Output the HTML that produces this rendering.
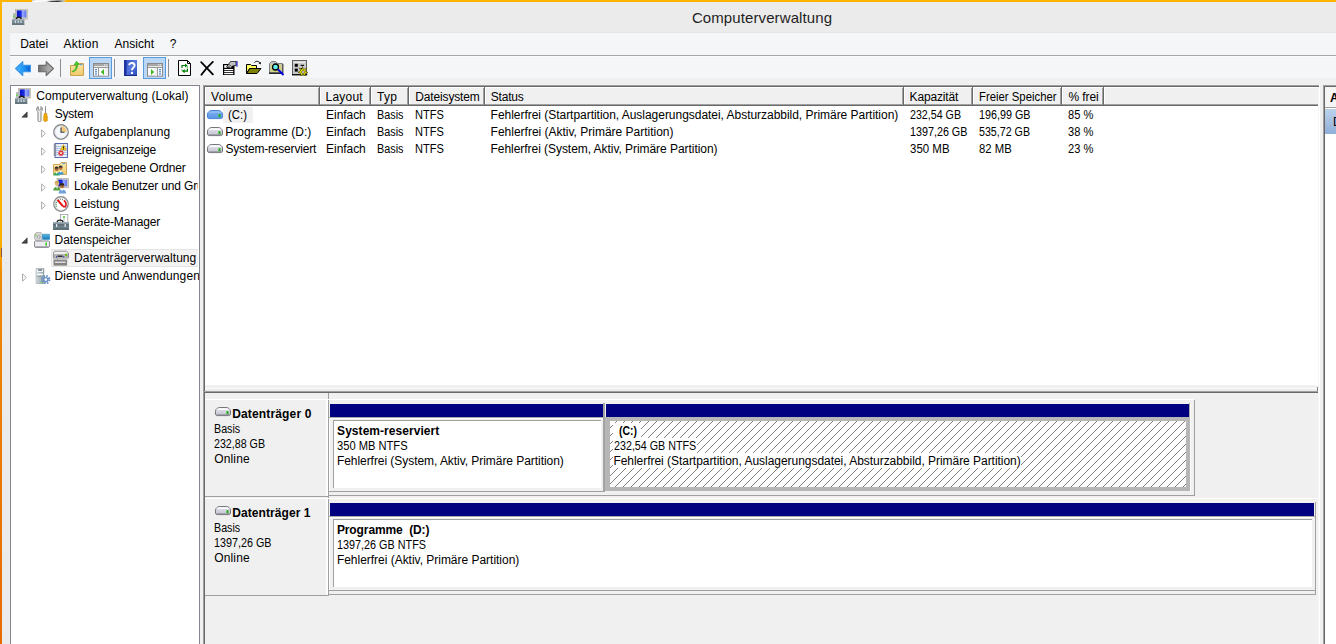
<!DOCTYPE html>
<html lang="de"><head><meta charset="utf-8"><title>Computerverwaltung</title>
<style>
html,body{margin:0;padding:0}
body{width:1336px;height:644px;overflow:hidden;position:relative;background:#f0f0f0;font-family:"Liberation Sans",sans-serif;font-size:12px;color:#000}
#w{position:absolute;left:0;top:0;width:1336px;height:644px;overflow:hidden}
#w>div,#w>svg,#w>span{position:absolute;display:block}
.t{line-height:20px;height:20px;white-space:nowrap}
</style></head><body><div id="w">
<div style="left:0px;top:0px;width:1336px;height:644px;background:#ebebeb;"></div>
<div style="left:0px;top:0px;width:1336px;height:2px;background:#ffb500;"></div>
<div style="left:0px;top:0px;width:2px;height:644px;background:linear-gradient(#ffb500 0,#fdb000 240px,#ee8a08 276px,#e86a04 644px);"></div>
<div style="left:1px;top:248px;width:1px;height:9px;background:rgba(90,50,90,.7);"></div>
<div style="left:32px;top:0;width:34px;height:1px;background:linear-gradient(90deg,#c8ccd4 0,#f4f4f4 12%,#fafafa 45%,#c4c4c4 60%,#8c8c8c 80%,#c8c8c8 94%,#ffb500 100%)"></div>
<div style="left:32px;top:1px;width:34px;height:1px;background:linear-gradient(90deg,#e8eef8 0,#fff 10%,#f0f0f0 42%,#505050 56%,#2c2c2c 75%,#a8a8a8 89%,#f0c050 96%,#ffb500 100%)"></div>
<div style="left:10px;top:32px;width:1326px;height:1px;background:#e6e6e6;"></div>
<div style="left:10px;top:33px;width:1326px;height:22px;background:#f5f6f7;"></div>
<div style="left:10px;top:55px;width:1326px;height:1px;background:#a8a8a8;"></div>
<div style="left:10px;top:56px;width:1326px;height:22px;background:#f5f6f7;"></div>
<div style="left:10px;top:56px;width:1326px;height:1px;background:#fcfcfc;"></div>
<div style="left:10px;top:78px;width:1326px;height:566px;background:#f0f0f0;"></div>
<div style="left:89px;top:57px;width:21px;height:20px;background:#bbd7f6;border:1px solid #5a9be0"></div>
<div style="left:143px;top:57px;width:21px;height:20px;background:#bbd7f6;border:1px solid #5a9be0"></div>
<div style="left:60px;top:59px;width:1px;height:18px;background:#8e8e8e;"></div>
<div style="left:114px;top:59px;width:1px;height:18px;background:#8e8e8e;"></div>
<div style="left:168px;top:59px;width:1px;height:18px;background:#8e8e8e;"></div>
<div style="left:10px;top:85px;width:188px;height:600px;background:#fff;border:1px solid #828790"></div>
<div style="left:51px;top:249px;width:146px;height:16px;background:#f3f3f3;border:1px solid #e4e4e4;border-right:0"></div>
<div style="left:203px;top:85px;width:1px;height:559px;background:#a0a0a0;"></div>
<div style="left:204px;top:85px;width:1px;height:559px;background:#696969;"></div>
<div style="left:203px;top:85px;width:1117px;height:1px;background:#a0a0a0;"></div>
<div style="left:204px;top:86px;width:1115px;height:1px;background:#696969;"></div>
<div style="left:205px;top:87px;width:1113px;height:298px;background:#fff;"></div>
<div style="left:1318px;top:87px;width:1px;height:557px;background:#f7f7f7;"></div>
<div style="left:1319px;top:85px;width:1px;height:559px;background:#fdfdfd;"></div>
<div style="left:205px;top:388px;width:1113px;height:1px;background:#fbfbfb;"></div>
<div style="left:205px;top:389px;width:1113px;height:2px;background:#ececec;"></div>
<div style="left:1317px;top:387px;width:1px;height:5px;background:#808080;"></div>
<div style="left:204px;top:391px;width:1114px;height:1px;background:#a0a0a0;"></div>
<div style="left:205px;top:392px;width:1113px;height:1px;background:#696969;"></div>
<div style="left:205px;top:87px;width:1113px;height:17px;background:#f0f0f0;"></div>
<div style="left:205px;top:87px;width:1113px;height:1px;background:#fff;"></div>
<div style="left:205px;top:104px;width:1113px;height:1px;background:#a0a0a0;"></div>
<div style="left:205px;top:105px;width:1113px;height:1px;background:#696969;"></div>
<div style="left:205px;top:87px;width:1px;height:17px;background:#fff;"></div>
<div style="left:318px;top:88px;width:1px;height:17px;background:#a0a0a0;"></div>
<div style="left:319px;top:87px;width:1px;height:18px;background:#696969;"></div>
<div style="left:320px;top:87px;width:1px;height:17px;background:#fff;"></div>
<div style="left:369px;top:88px;width:1px;height:17px;background:#a0a0a0;"></div>
<div style="left:370px;top:87px;width:1px;height:18px;background:#696969;"></div>
<div style="left:371px;top:87px;width:1px;height:17px;background:#fff;"></div>
<div style="left:407px;top:88px;width:1px;height:17px;background:#a0a0a0;"></div>
<div style="left:408px;top:87px;width:1px;height:18px;background:#696969;"></div>
<div style="left:409px;top:87px;width:1px;height:17px;background:#fff;"></div>
<div style="left:483px;top:88px;width:1px;height:17px;background:#a0a0a0;"></div>
<div style="left:484px;top:87px;width:1px;height:18px;background:#696969;"></div>
<div style="left:485px;top:87px;width:1px;height:17px;background:#fff;"></div>
<div style="left:902px;top:88px;width:1px;height:17px;background:#a0a0a0;"></div>
<div style="left:903px;top:87px;width:1px;height:18px;background:#696969;"></div>
<div style="left:904px;top:87px;width:1px;height:17px;background:#fff;"></div>
<div style="left:971px;top:88px;width:1px;height:17px;background:#a0a0a0;"></div>
<div style="left:972px;top:87px;width:1px;height:18px;background:#696969;"></div>
<div style="left:973px;top:87px;width:1px;height:17px;background:#fff;"></div>
<div style="left:1060px;top:88px;width:1px;height:17px;background:#a0a0a0;"></div>
<div style="left:1061px;top:87px;width:1px;height:18px;background:#696969;"></div>
<div style="left:1062px;top:87px;width:1px;height:17px;background:#fff;"></div>
<div style="left:1102px;top:88px;width:1px;height:17px;background:#a0a0a0;"></div>
<div style="left:1103px;top:87px;width:1px;height:18px;background:#696969;"></div>
<div style="left:1104px;top:87px;width:1px;height:17px;background:#fff;"></div>
<div style="left:223px;top:107px;width:30px;height:16px;background:#f1f1f1"></div>
<div style="left:1323px;top:85px;width:1px;height:559px;background:#a0a0a0;"></div>
<div style="left:1324px;top:86px;width:1px;height:558px;background:#696969;"></div>
<div style="left:1323px;top:85px;width:13px;height:1px;background:#a0a0a0;"></div>
<div style="left:1324px;top:86px;width:12px;height:1px;background:#696969;"></div>
<div style="left:1325px;top:87px;width:11px;height:557px;background:#fff;"></div>
<div style="left:1325px;top:87px;width:11px;height:20px;background:#f5f5f5;"></div>
<div style="left:1325px;top:107px;width:11px;height:1px;background:#a0a0a0;"></div>
<div style="left:1325px;top:109px;width:11px;height:25px;background:linear-gradient(#bcd2ec,#8fafd9);"></div>
<div style="left:328px;top:393px;width:1px;height:251px;background:#a0a0a0;"></div>
<div style="left:205px;top:399px;width:124px;height:1px;background:#fff;"></div>
<div style="left:205px;top:496px;width:124px;height:1px;background:#a0a0a0;"></div>
<div style="left:326px;top:400px;width:2px;height:96px;background:#fff;"></div>
<div style="left:329px;top:399px;width:865px;height:1px;background:#fff;"></div>
<div style="left:1194px;top:400px;width:1px;height:96px;background:#a0a0a0;"></div>
<div style="left:329px;top:495px;width:866px;height:1px;background:#a0a0a0;"></div>
<div style="left:330px;top:404px;width:273px;height:13px;background:#000080;"></div>
<div style="left:329px;top:417px;width:275px;height:1px;background:#a8a8a8;"></div>
<div style="left:329px;top:418px;width:274px;height:1px;background:#fff;"></div>
<div style="left:329px;top:418px;width:1px;height:73px;background:#fff;"></div>
<div style="left:333px;top:420px;width:268px;height:1px;background:#a0a0a0;"></div>
<div style="left:333px;top:420px;width:1px;height:68px;background:#a0a0a0;"></div>
<div style="left:334px;top:421px;width:267px;height:67px;background:#fff;"></div>
<div style="left:329px;top:491px;width:275px;height:1px;background:#a0a0a0;"></div>
<div style="left:603px;top:403px;width:2px;height:89px;background:#a4a4a4;"></div>
<div style="left:606px;top:404px;width:583px;height:13px;background:#000080;"></div>
<div style="left:1189px;top:403px;width:1px;height:14px;background:#a8a8a8;"></div>
<div style="left:1190px;top:403px;width:1px;height:89px;background:#fcfcfc;"></div>
<div style="left:605px;top:417px;width:585px;height:74px;background:#b6b6b6;"></div>
<svg style="left:610px;top:421px" width="576" height="66"><defs><pattern id="h" width="8" height="8" patternUnits="userSpaceOnUse" x="7" y="0"><rect x="0" y="7" width="1" height="1" fill="#7f7f7f"/><rect x="1" y="6" width="1" height="1" fill="#7f7f7f"/><rect x="2" y="5" width="1" height="1" fill="#7f7f7f"/><rect x="3" y="4" width="1" height="1" fill="#7f7f7f"/><rect x="4" y="3" width="1" height="1" fill="#7f7f7f"/><rect x="5" y="2" width="1" height="1" fill="#7f7f7f"/><rect x="6" y="1" width="1" height="1" fill="#7f7f7f"/><rect x="7" y="0" width="1" height="1" fill="#7f7f7f"/></pattern></defs><rect width="100%" height="100%" fill="#fff"/><rect width="100%" height="100%" fill="url(#h)"/></svg>
<div style="left:205px;top:498px;width:124px;height:1px;background:#fff;"></div>
<div style="left:205px;top:595px;width:124px;height:1px;background:#a0a0a0;"></div>
<div style="left:326px;top:499px;width:2px;height:96px;background:#fff;"></div>
<div style="left:329px;top:498px;width:989px;height:1px;background:#fff;"></div>
<div style="left:1315px;top:502px;width:1px;height:93px;background:#a0a0a0;"></div>
<div style="left:329px;top:594px;width:987px;height:1px;background:#a0a0a0;"></div>
<div style="left:330px;top:503px;width:984px;height:13px;background:#000080;"></div>
<div style="left:329px;top:516px;width:986px;height:1px;background:#a8a8a8;"></div>
<div style="left:329px;top:517px;width:985px;height:1px;background:#fff;"></div>
<div style="left:329px;top:517px;width:1px;height:73px;background:#fff;"></div>
<div style="left:333px;top:519px;width:979px;height:1px;background:#a0a0a0;"></div>
<div style="left:333px;top:519px;width:1px;height:68px;background:#a0a0a0;"></div>
<div style="left:334px;top:520px;width:978px;height:67px;background:#fff;"></div>
<div style="left:329px;top:590px;width:986px;height:1px;background:#a0a0a0;"></div>
<div style="left:205px;top:596px;width:124px;height:1px;background:#f0f0f0;"></div>
<div style="left:328px;top:596px;width:1px;height:48px;background:#f0f0f0;"></div>
<div style="left:613px;top:423px;width:28px;height:15px;background:#fff;"></div>
<div style="left:613px;top:438px;width:84px;height:15px;background:#fff;"></div>
<div style="left:613px;top:453px;width:408px;height:15px;background:#fff;"></div>
<svg style="left:12px;top:9px" width="16" height="16" viewBox="0 0 16 16"><defs><linearGradient id="scr" x1="0" y1="0" x2="1" y2="0"><stop offset="0" stop-color="#0a14c8"/><stop offset=".45" stop-color="#1a2ee0"/><stop offset=".6" stop-color="#9aa8ff"/><stop offset="1" stop-color="#5a74ee"/></linearGradient></defs>
<rect x="1" y="4" width="2.5" height="6.5" fill="#b8bcc0"/><rect x="1.2" y="6.5" width="1.6" height="1.4" fill="#50e030"/>
<rect x="3.5" y="0" width="12.5" height="10" fill="#d8d4c4" stroke="#a8a498" stroke-width=".6"/><rect x="4.8" y="1.4" width="9.6" height="7.2" fill="url(#scr)"/>
<path d="M4.3 10.2C4.3 7.6 9.2 7.6 9.2 10.2" fill="none" stroke="#1a1a1a" stroke-width="1.3"/>
<rect x="0" y="10" width="12.3" height="5.8" fill="#74868f"/><rect x="0" y="10" width="12.3" height="1.3" fill="#9fb0b8"/><rect x="0" y="14.6" width="12.3" height="1.2" fill="#5d6d76"/>
<rect x="2.8" y="11.5" width="1.1" height="2.4" fill="#e8eef0"/><rect x="5.6" y="11.5" width="1.1" height="2.4" fill="#e8eef0"/><rect x="8.4" y="11.5" width="1.1" height="2.4" fill="#e8eef0"/></svg>
<svg style="left:15px;top:61px" width="16" height="16" viewBox="0 0 16 16"><defs><linearGradient id="bk" x1="0" y1="0" x2="1" y2="0"><stop offset="0" stop-color="#4ab4ff"/><stop offset=".55" stop-color="#1e96f5"/><stop offset="1" stop-color="#0a5ccc"/></linearGradient></defs>
<path d="M0.6 7.5L7.8 0.6V4.4H15.4V10.8H7.8V14.6Z" fill="url(#bk)" stroke="#3a94e8" stroke-width="1.1" stroke-linejoin="round"/></svg>
<svg style="left:38px;top:61px" width="16" height="16" viewBox="0 0 16 16"><defs><linearGradient id="fw" x1="0" y1="0" x2="1" y2="0"><stop offset="0" stop-color="#6e6e6e"/><stop offset=".5" stop-color="#9c9c9c"/><stop offset="1" stop-color="#b8b8b8"/></linearGradient></defs>
<path d="M15.4 7.5L8.2 0.6V4.4H0.6V10.8H8.2V14.6Z" fill="url(#fw)" stroke="#6a6a6a" stroke-width="1.1" stroke-linejoin="round"/></svg>
<svg style="left:70px;top:61px" width="16" height="16" viewBox="0 0 16 16"><defs><linearGradient id="fu" x1="0" y1="0" x2="0" y2="1"><stop offset="0" stop-color="#fae6a8"/><stop offset="1" stop-color="#f0c868"/></linearGradient></defs>
<path d="M0.5 4.5H7L8.5 2.5H13.5V14.5H0.5Z" fill="url(#fu)" stroke="#c8a050" stroke-width="1"/><rect x="10" y="3.2" width="2.5" height="1" fill="#4a90e0"/>
<path d="M2 10.5C5 9.5 6.5 6.5 6 3.5L3.8 4.2L6.5 0.2L9.5 3.6L7.6 3.5C8 7.5 5.5 10.5 2.5 11Z" fill="#48c828" stroke="#2fa018" stroke-width=".5"/></svg>
<svg style="left:93px;top:63px" width="16" height="16" viewBox="0 0 16 16"><rect x=".5" y=".5" width="15" height="12.6" fill="#fff" stroke="#8a8a8a" stroke-width="1"/><rect x="1" y="1" width="14" height="2" fill="#a8a8a8"/><rect x="11.2" y="1.3" width="1.1" height="1.1" fill="#fff"/><rect x="13.2" y="1.3" width="1.1" height="1.1" fill="#fff"/><rect x="1" y="3" width="14" height="1" fill="#e8e8e8"/><rect x="1" y="4" width="14" height="1" fill="#9a9a9a"/><rect x="5" y="5" width="1" height="8" fill="#9a9a9a"/><rect x="2" y="6" width="2" height="1.2" fill="#4a84c8"/><rect x="2" y="8.2" width="2" height="1.2" fill="#4a84c8"/><rect x="2" y="10.4" width="2" height="1.2" fill="#4a84c8"/><path d="M11 6V12L7.8 9Z" fill="#3cb81e"/><rect x="11.5" y="5" width="3.5" height="7.6" fill="#f0f0f0"/></svg>
<svg style="left:124px;top:60px" width="16" height="16" viewBox="0 0 16 16"><defs><linearGradient id="hp" x1="0" y1="0" x2="1" y2="1"><stop offset="0" stop-color="#2a4ac8"/><stop offset=".5" stop-color="#5878e0"/><stop offset="1" stop-color="#2a46b8"/></linearGradient></defs>
<rect x="0" y="0" width="13" height="16" fill="url(#hp)"/><rect x="0" y="0" width="2.6" height="16" fill="#1e34a0"/><rect x="0" y="15" width="13" height="1" fill="#1a2c88"/>
<path d="M5.2 5.2C5.2 2.2 10.6 2.2 10.6 5.4C10.6 7.6 8 7.8 8 10.2" fill="none" stroke="#fff" stroke-width="1.9"/><circle cx="8" cy="12.9" r="1.2" fill="#fff"/></svg>
<svg style="left:147px;top:63px" width="16" height="16" viewBox="0 0 16 16"><rect x=".5" y=".5" width="15" height="12.6" fill="#fff" stroke="#8a8a8a" stroke-width="1"/><rect x="1" y="1" width="14" height="2" fill="#a8a8a8"/><rect x="11.2" y="1.3" width="1.1" height="1.1" fill="#fff"/><rect x="13.2" y="1.3" width="1.1" height="1.1" fill="#fff"/><rect x="1" y="3" width="14" height="1" fill="#e8e8e8"/><rect x="1" y="4" width="14" height="1" fill="#9a9a9a"/><rect x="10" y="5" width="1" height="8" fill="#9a9a9a"/><rect x="12" y="6" width="2" height="1.2" fill="#4a84c8"/><rect x="12" y="8.2" width="2" height="1.2" fill="#4a84c8"/><rect x="12" y="10.4" width="2" height="1.2" fill="#4a84c8"/><path d="M4 6V12L7.2 9Z" fill="#3cb81e"/><rect x="7.5" y="5" width="2.5" height="7.6" fill="#f0f0f0"/></svg>
<svg style="left:178px;top:60px" width="16" height="16" viewBox="0 0 16 16"><path d="M0.5 0.5H9.5L12.5 3.5V15.5H0.5Z" fill="#fff" stroke="#000" stroke-width="1"/><path d="M9.5 0.5V3.5H12.5" fill="none" stroke="#000" stroke-width="1"/>
<path d="M4 8V5.5H7.5" fill="none" stroke="#008000" stroke-width="1.2"/><path d="M7 3.4L9.6 5.5L7 7.6Z" fill="#008000"/>
<path d="M9.4 8.6V11.2H6" fill="none" stroke="#008000" stroke-width="1.2"/><path d="M6.6 9.1L4 11.2L6.6 13.3Z" fill="#008000"/><path d="M4 9.5V10.5M9.4 6.5V7.5" stroke="#008000" stroke-width="1.2"/></svg>
<svg style="left:200px;top:61px" width="16" height="16" viewBox="0 0 16 16"><path d="M1.2 1.2C4 4 9 9.5 12.8 13.4M12.8 0.9C9.5 4 4 10 1.4 13.8" fill="none" stroke="#000" stroke-width="1.8" stroke-linecap="round"/></svg>
<svg style="left:222px;top:60px" width="16" height="16" viewBox="0 0 16 16"><rect x="1" y="4" width="11.5" height="11" fill="#000"/><rect x="2.2" y="5.2" width="3" height="2.6" fill="#fff"/><rect x="2.2" y="9" width="9" height="1.2" fill="#fff"/><rect x="2.2" y="11" width="9" height="1.2" fill="#fff"/><rect x="2.2" y="13" width="9" height="1.2" fill="#fff"/>
<path d="M4.5 7L8.5 1.5H14V5.5L10.5 6L9 8.5Z" fill="#c0c0c0" stroke="#000" stroke-width=".7"/><path d="M6 5.5L8.5 8M7 4.2L9.5 6.8" stroke="#000" stroke-width=".6"/><rect x="14.4" y="1" width="1.1" height="5.6" fill="#0000c0"/></svg>
<svg style="left:246px;top:60px" width="16" height="16" viewBox="0 0 16 16"><path d="M0.5 4.5H4.5L5.5 5.5H10.5V8.5H3.5L0.5 13.5Z" fill="#ffff60" stroke="#000" stroke-width="1"/><path d="M0.5 13.5L4 8.5H15L11 13.5Z" fill="#808000" stroke="#000" stroke-width="1"/>
<path d="M8.5 2.5C10 0.8 13 0.8 14.2 3.5" fill="none" stroke="#000" stroke-width="1"/><path d="M12.6 3.2L14.6 4.6L15 2Z" fill="#000"/></svg>
<svg style="left:269px;top:60px" width="16" height="16" viewBox="0 0 16 16"><path d="M0.5 3.5L2.5 1.5H6.5L8.5 3.5H13.5V13H0.5Z" fill="#c0c0c0" stroke="#808080" stroke-width="1"/><rect x="1.5" y="4.5" width="11" height="7.5" fill="#d8d870" opacity=".75"/><rect x="0" y="12.6" width="14" height="1.2" fill="#000"/><rect x="13.4" y="4" width="1" height="9.5" fill="#404040"/>
<circle cx="6.5" cy="7" r="3" fill="#60f0f0" stroke="#000" stroke-width="1.3"/><path d="M9 9.5L14.5 15" stroke="#0000e0" stroke-width="2"/></svg>
<svg style="left:292px;top:60px" width="16" height="16" viewBox="0 0 16 16"><rect x=".5" y=".5" width="14" height="14" fill="#c8c8c8" stroke="#606060" stroke-width="1"/><rect x="0" y="14.2" width="15.2" height="1.2" fill="#000"/><rect x="1.5" y="1.5" width="12" height="1.6" fill="#e8e8e8"/>
<rect x="2.8" y="3.8" width="3" height="3" fill="#000"/><rect x="2.8" y="8.6" width="3" height="3" fill="#000"/><rect x="8.6" y="4.8" width="3.4" height="1.1" fill="#000"/><rect x="8.6" y="8" width="2.4" height="3" fill="#000"/>
<path d="M10.5 6.5L11.6 9.6L14.6 8.2L13.4 11.2L16 12.6L13 13.4L13.4 16L11 14.2L9 16L8.8 13.2L6 12.4L8.6 10.8L7.4 8L10 9.4Z" fill="#f8f000" stroke="#3a3a00" stroke-width=".6"/><circle cx="11" cy="12" r="1.5" fill="#c8c8c8" stroke="#3a3a00" stroke-width=".5"/></svg>
<svg style="left:15px;top:88px" width="16" height="16" viewBox="0 0 16 16"><defs><linearGradient id="scr" x1="0" y1="0" x2="1" y2="0"><stop offset="0" stop-color="#0a14c8"/><stop offset=".45" stop-color="#1a2ee0"/><stop offset=".6" stop-color="#9aa8ff"/><stop offset="1" stop-color="#5a74ee"/></linearGradient></defs>
<rect x="1" y="4" width="2.5" height="6.5" fill="#b8bcc0"/><rect x="1.2" y="6.5" width="1.6" height="1.4" fill="#50e030"/>
<rect x="3.5" y="0" width="12.5" height="10" fill="#d8d4c4" stroke="#a8a498" stroke-width=".6"/><rect x="4.8" y="1.4" width="9.6" height="7.2" fill="url(#scr)"/>
<path d="M4.3 10.2C4.3 7.6 9.2 7.6 9.2 10.2" fill="none" stroke="#1a1a1a" stroke-width="1.3"/>
<rect x="0" y="10" width="12.3" height="5.8" fill="#74868f"/><rect x="0" y="10" width="12.3" height="1.3" fill="#9fb0b8"/><rect x="0" y="14.6" width="12.3" height="1.2" fill="#5d6d76"/>
<rect x="2.8" y="11.5" width="1.1" height="2.4" fill="#e8eef0"/><rect x="5.6" y="11.5" width="1.1" height="2.4" fill="#e8eef0"/><rect x="8.4" y="11.5" width="1.1" height="2.4" fill="#e8eef0"/></svg>
<svg style="left:36px;top:106px" width="16" height="16" viewBox="0 0 16 16"><path d="M2.2 0.6C0.2 1.6 0.2 4.6 2 5.6V14.6C2 16 5 16 5 14.6V5.6C6.8 4.6 6.8 1.6 5 0.6V3.4L3.6 4.2L2.2 3.4Z" fill="#f4f4f4" stroke="#7c7c7c" stroke-width="1"/>
<rect x="9" y="0.3" width="1" height="7.2" fill="#8a8a8a"/><path d="M8.2 7.4H10.8V9.2L11.3 10V14.6C11.3 15.8 7.7 15.8 7.7 14.6V10L8.2 9.2Z" fill="#f2a800" stroke="#c88400" stroke-width=".6"/></svg>
<svg style="left:53px;top:124px" width="16" height="16" viewBox="0 0 16 16"><circle cx="8" cy="8" r="7.2" fill="#f4f8fc" stroke="#888" stroke-width="1.4"/><path d="M8 8V1.8A6.2 6.2 0 0 1 14.2 8Z" fill="#f4c878"/><circle cx="8" cy="8" r="6" fill="none" stroke="#dfe6ee" stroke-width=".8"/><path d="M8 3.6V8.3H11.6" fill="none" stroke="#2c3a50" stroke-width="1.1"/></svg>
<svg style="left:53px;top:142px" width="16" height="16" viewBox="0 0 16 16"><rect x="2" y="1.5" width="12.5" height="14" fill="#e6ecf8" stroke="#5a6cb0" stroke-width="1"/><path d="M3 4.5H14M3 6.5H14M3 8.5H14M3 10.5H14M3 12.5H14" stroke="#aabce6" stroke-width=".8"/>
<path d="M.6 3H3.2M.6 5H3.2M.6 7H3.2M.6 9H3.2M.6 11H3.2M.6 13H3.2" stroke="#6e6e6e" stroke-width="1.1"/>
<path d="M10.4 2.6L13.4 8H7.4Z" fill="#f8d020" stroke="#c09000" stroke-width=".5"/><rect x="10" y="4.4" width=".9" height="2" fill="#000"/><rect x="10" y="6.8" width=".9" height=".7" fill="#000"/>
<circle cx="8" cy="11.2" r="2.6" fill="#e03030"/><path d="M6.9 10.1L9.1 12.3M9.1 10.1L6.9 12.3" stroke="#fff" stroke-width=".9"/></svg>
<svg style="left:53px;top:160px" width="16" height="16" viewBox="0 0 16 16"><defs><linearGradient id="sf" x1="0" y1="0" x2="0" y2="1"><stop offset="0" stop-color="#fbe9b0"/><stop offset="1" stop-color="#f2cc6c"/></linearGradient></defs>
<path d="M0.5 4.5H6.5L8 2.5H13.5V14.5H0.5Z" fill="url(#sf)" stroke="#d0a858" stroke-width="1"/><rect x="9.2" y="3.2" width="3" height="1" fill="#5a98e8"/>
<circle cx="3.6" cy="9" r="2" fill="#a06838"/><path d="M1.6 8.6A2 2 0 0 1 5.6 8.6Z" fill="#2a2a2a"/><path d="M0.4 15.6C0.4 11.4 6.8 11.4 6.8 15.6Z" fill="#38a860"/>
<circle cx="7.6" cy="8" r="2" fill="#b07848"/><path d="M5.6 7.6A2 2 0 0 1 9.6 7.6Z" fill="#2a2a2a"/><path d="M4.6 14.4C4.6 10.4 10.6 10.4 10.6 14.4Z" fill="#3a9ad8"/><path d="M6.6 11L7.6 13L8.6 11Z" fill="#fff"/><path d="M2.6 12L3.6 14L4.6 12Z" fill="#fff"/></svg>
<svg style="left:53px;top:178px" width="16" height="16" viewBox="0 0 16 16"><defs><linearGradient id="us" x1="0" y1="0" x2="1" y2="0"><stop offset="0" stop-color="#0a14c8"/><stop offset=".4" stop-color="#1a2ee0"/><stop offset=".6" stop-color="#9aa8ff"/><stop offset="1" stop-color="#5a74ee"/></linearGradient></defs>
<rect x="4" y="0.4" width="11.6" height="9.4" fill="#d8d4c4" stroke="#a8a498" stroke-width=".6"/><rect x="5.2" y="1.6" width="9" height="6.8" fill="url(#us)"/>
<circle cx="4" cy="5.4" r="2.3" fill="#e0b080"/><path d="M1.7 5A2.3 2.3 0 0 1 6.3 5Z" fill="#c8a850"/><path d="M0.2 12.6C0.2 7.6 7.6 7.6 7.6 12.6Z" fill="#58a040"/><path d="M3 8.6L4 11L5 8.6Z" fill="#fff"/>
<circle cx="9" cy="7.8" r="2.4" fill="#a86c40"/><path d="M6.6 7.4A2.4 2.4 0 0 1 11.4 7.4Z" fill="#2a2420"/><path d="M5.6 15.6C5.6 10 13.2 10 13.2 15.6Z" fill="#70a0d8"/><path d="M8 11L9 13.4L10 11Z" fill="#fff"/></svg>
<svg style="left:53px;top:196px" width="16" height="16" viewBox="0 0 16 16"><circle cx="8" cy="8" r="7.2" fill="#fff" stroke="#8c8c8c" stroke-width="1.4"/><circle cx="8" cy="8" r="6" fill="none" stroke="#e4e4e4" stroke-width=".8"/>
<path d="M3.6 10.6A5 5 0 0 1 6 3.6" fill="none" stroke="#509060" stroke-width="1.4" stroke-dasharray="1 .9"/><path d="M7 3.2A5 5 0 0 1 10.4 4" fill="none" stroke="#708878" stroke-width="1.3" stroke-dasharray="1 .9"/>
<path d="M10.8 4.4A5 5 0 0 1 12.4 10.6H10" fill="none" stroke="#e01818" stroke-width="1.7"/><path d="M4.6 3.8L10 10.4" stroke="#e81010" stroke-width="2"/></svg>
<svg style="left:53px;top:214px" width="16" height="16" viewBox="0 0 16 16"><rect x="7.4" y=".5" width="7.4" height="8" fill="#fff" stroke="#a0a0a0" stroke-width=".8"/><rect x="10" y="2" width="2" height="6" fill="#d8dce0"/><circle cx="11" cy="3" r="1" fill="#58d030"/>
<path d="M4.2 8.2C4.2 5.4 10 5.4 10 8.2" fill="none" stroke="#1a1a1a" stroke-width="1.3"/>
<rect x="0" y="8" width="16" height="7.8" fill="#6c7e88"/><rect x="0" y="8" width="16" height="1.6" fill="#98aab2"/><rect x="0" y="14.4" width="16" height="1.4" fill="#56666e"/><rect x="0" y="10.4" width="16" height=".8" fill="#56666e"/>
<rect x="3" y="10" width="1.2" height="3" fill="#e8eef0"/><rect x="11.6" y="10" width="1.2" height="3" fill="#e8eef0"/></svg>
<svg style="left:34px;top:232px" width="16" height="16" viewBox="0 0 16 16"><defs><linearGradient id="sc" x1="0" y1="0" x2="0" y2="1"><stop offset="0" stop-color="#58b8e8"/><stop offset="1" stop-color="#1878b0"/></linearGradient></defs>
<ellipse cx="4.6" cy="4.6" rx="4.4" ry="4.6" fill="#d4d4d4" stroke="#9a9a9a" stroke-width=".7"/><circle cx="4.8" cy="5" r="1.3" fill="#fff" stroke="#707070" stroke-width=".6"/><circle cx="1.8" cy="3.4" r=".8" fill="#70d840"/>
<rect x="8.4" y="2.2" width="7.4" height="5.4" rx="1" fill="url(#sc)" stroke="#2888c0" stroke-width=".6"/>
<path d="M0.5 10C0.5 9 1 9 2 9H14C15 9 15.5 9 15.5 10V14C15.5 15.4 14.6 15.4 14 15.4H2C1 15.4 .5 15.4 .5 14Z" fill="#ececf2" stroke="#8a8a92" stroke-width="1"/><rect x="1" y="14" width="14" height="1" fill="#b0b0b8"/><rect x="11.4" y="10.6" width="1.6" height="3" fill="#40c820"/></svg>
<svg style="left:53px;top:250px" width="16" height="16" viewBox="0 0 16 16"><path d="M1.5 1.2H13.5L15.5 3V8H0.5V3Z" fill="#f0f0f0" stroke="#909090" stroke-width="1"/><rect x="1" y="4" width="14" height="4" fill="#b4b4b4"/><rect x="4.6" y="5.6" width="5" height="1.2" fill="#101010"/><rect x="3" y="6.4" width="1" height="1" fill="#0000c0"/><rect x="10.2" y="6.4" width="1" height="1" fill="#0000c0"/><rect x="12" y="3.6" width="2.2" height="2.6" fill="#c89020"/><rect x="12.4" y="4" width="1.4" height="1.8" fill="#30e020"/>
<rect x=".5" y="8.6" width="13.6" height="7" fill="#848484"/><rect x=".5" y="8.6" width="13.6" height="1.2" fill="#d8d8d8"/><rect x="2" y="11.6" width="10.6" height="1.2" fill="#f0f0f0"/><rect x="4" y="8.6" width="1" height="1.6" fill="#909090"/></svg>
<svg style="left:35px;top:268px" width="16" height="16" viewBox="0 0 16 16"><defs><linearGradient id="sv" x1="0" y1="0" x2="1" y2="0"><stop offset="0" stop-color="#d4dcde"/><stop offset="1" stop-color="#8a9aa0"/></linearGradient></defs>
<rect x="1" y="0.3" width="8" height="15.6" fill="url(#sv)" stroke="#a0aab0" stroke-width=".5"/><rect x="2" y="1.4" width="6" height="2.6" fill="#f4f8f8"/><rect x="3" y="1.6" width="4" height=".9" fill="#203040"/><rect x="2" y="5.4" width="6" height="1.8" fill="#f0f4f4"/><rect x="2" y="8" width="5" height=".8" fill="#8a969a"/><rect x="5.8" y="14" width="2" height="1" fill="#60e040"/>
<g transform="translate(10.8,11.6)"><circle r="3.4" fill="none" stroke="#6890c8" stroke-width="2.4" stroke-dasharray="1.5 1.17"/><circle r="2.6" fill="#6890c8"/><circle r="1.3" fill="#fff"/></g></svg>
<svg style="left:207px;top:109px" width="16" height="16" viewBox="0 0 16 16"><defs><linearGradient id="v4a84d8" x1="0" y1="0" x2="0" y2="1"><stop offset="0" stop-color="#7eb0f0"/><stop offset="1" stop-color="#5c96e4"/></linearGradient></defs>
<path d="M4.2 1.5H11.8C13 1.5 15.5 3.4 15.5 4.8V8C15.5 9 14.8 9.6 13.8 9.6H2.2C1.2 9.6 .5 9 .5 8V4.8C.5 3.4 3 1.5 4.2 1.5Z" fill="url(#v4a84d8)" stroke="#4a84d8" stroke-width="1"/><path d="M4.3 2.3H11.7C12.6 2.3 13.8 3.2 14.4 4H1.6C2.2 3.2 3.4 2.3 4.3 2.3Z" fill="#90bcf4"/><rect x="11.4" y="5.2" width="1.9" height="3" fill="#30c020"/><rect x="12.6" y="5.2" width=".7" height="3" fill="#208818"/></svg>
<svg style="left:207px;top:126px" width="16" height="16" viewBox="0 0 16 16"><defs><linearGradient id="v74747c" x1="0" y1="0" x2="0" y2="1"><stop offset="0" stop-color="#e4e4ec"/><stop offset="1" stop-color="#c4c4d0"/></linearGradient></defs>
<path d="M4.2 1.5H11.8C13 1.5 15.5 3.4 15.5 4.8V8C15.5 9 14.8 9.6 13.8 9.6H2.2C1.2 9.6 .5 9 .5 8V4.8C.5 3.4 3 1.5 4.2 1.5Z" fill="url(#v74747c)" stroke="#74747c" stroke-width="1"/><path d="M4.3 2.3H11.7C12.6 2.3 13.8 3.2 14.4 4H1.6C2.2 3.2 3.4 2.3 4.3 2.3Z" fill="#fbfbfd"/><rect x="11.4" y="5.2" width="1.9" height="3" fill="#30c020"/><rect x="12.6" y="5.2" width=".7" height="3" fill="#208818"/><rect x="1.2" y="8.3" width="13.6" height=".9" fill="#90909a"/></svg>
<svg style="left:207px;top:143px" width="16" height="16" viewBox="0 0 16 16"><defs><linearGradient id="v74747c" x1="0" y1="0" x2="0" y2="1"><stop offset="0" stop-color="#e4e4ec"/><stop offset="1" stop-color="#c4c4d0"/></linearGradient></defs>
<path d="M4.2 1.5H11.8C13 1.5 15.5 3.4 15.5 4.8V8C15.5 9 14.8 9.6 13.8 9.6H2.2C1.2 9.6 .5 9 .5 8V4.8C.5 3.4 3 1.5 4.2 1.5Z" fill="url(#v74747c)" stroke="#74747c" stroke-width="1"/><path d="M4.3 2.3H11.7C12.6 2.3 13.8 3.2 14.4 4H1.6C2.2 3.2 3.4 2.3 4.3 2.3Z" fill="#fbfbfd"/><rect x="11.4" y="5.2" width="1.9" height="3" fill="#30c020"/><rect x="12.6" y="5.2" width=".7" height="3" fill="#208818"/><rect x="1.2" y="8.3" width="13.6" height=".9" fill="#90909a"/></svg>
<svg style="left:215px;top:406px" width="16" height="16" viewBox="0 0 16 16"><defs><linearGradient id="v74747c" x1="0" y1="0" x2="0" y2="1"><stop offset="0" stop-color="#e4e4ec"/><stop offset="1" stop-color="#c4c4d0"/></linearGradient></defs>
<path d="M4.2 1.5H11.8C13 1.5 15.5 3.4 15.5 4.8V8C15.5 9 14.8 9.6 13.8 9.6H2.2C1.2 9.6 .5 9 .5 8V4.8C.5 3.4 3 1.5 4.2 1.5Z" fill="url(#v74747c)" stroke="#74747c" stroke-width="1"/><path d="M4.3 2.3H11.7C12.6 2.3 13.8 3.2 14.4 4H1.6C2.2 3.2 3.4 2.3 4.3 2.3Z" fill="#fbfbfd"/><rect x="11.4" y="5.2" width="1.9" height="3" fill="#30c020"/><rect x="12.6" y="5.2" width=".7" height="3" fill="#208818"/><rect x="1.2" y="8.3" width="13.6" height=".9" fill="#90909a"/></svg>
<svg style="left:215px;top:505px" width="16" height="16" viewBox="0 0 16 16"><defs><linearGradient id="v74747c" x1="0" y1="0" x2="0" y2="1"><stop offset="0" stop-color="#e4e4ec"/><stop offset="1" stop-color="#c4c4d0"/></linearGradient></defs>
<path d="M4.2 1.5H11.8C13 1.5 15.5 3.4 15.5 4.8V8C15.5 9 14.8 9.6 13.8 9.6H2.2C1.2 9.6 .5 9 .5 8V4.8C.5 3.4 3 1.5 4.2 1.5Z" fill="url(#v74747c)" stroke="#74747c" stroke-width="1"/><path d="M4.3 2.3H11.7C12.6 2.3 13.8 3.2 14.4 4H1.6C2.2 3.2 3.4 2.3 4.3 2.3Z" fill="#fbfbfd"/><rect x="11.4" y="5.2" width="1.9" height="3" fill="#30c020"/><rect x="12.6" y="5.2" width=".7" height="3" fill="#208818"/><rect x="1.2" y="8.3" width="13.6" height=".9" fill="#90909a"/></svg>
<svg style="left:20.5px;top:111px" width="7" height="7" viewBox="0 0 7 7"><path d="M6.2 0.9V6.2H0.9Z" fill="#464646" stroke="#303030" stroke-width=".6"/></svg>
<svg style="left:20.5px;top:237px" width="7" height="7" viewBox="0 0 7 7"><path d="M6.2 0.9V6.2H0.9Z" fill="#464646" stroke="#303030" stroke-width=".6"/></svg>
<svg style="left:41px;top:129px" width="6" height="9" viewBox="0 0 6 9"><path d="M0.6 0.9L4.3 4.5L0.6 8.1Z" fill="#fff" stroke="#a4a4a4" stroke-width=".95"/></svg>
<svg style="left:41px;top:147px" width="6" height="9" viewBox="0 0 6 9"><path d="M0.6 0.9L4.3 4.5L0.6 8.1Z" fill="#fff" stroke="#a4a4a4" stroke-width=".95"/></svg>
<svg style="left:41px;top:165px" width="6" height="9" viewBox="0 0 6 9"><path d="M0.6 0.9L4.3 4.5L0.6 8.1Z" fill="#fff" stroke="#a4a4a4" stroke-width=".95"/></svg>
<svg style="left:41px;top:183px" width="6" height="9" viewBox="0 0 6 9"><path d="M0.6 0.9L4.3 4.5L0.6 8.1Z" fill="#fff" stroke="#a4a4a4" stroke-width=".95"/></svg>
<svg style="left:41px;top:201px" width="6" height="9" viewBox="0 0 6 9"><path d="M0.6 0.9L4.3 4.5L0.6 8.1Z" fill="#fff" stroke="#a4a4a4" stroke-width=".95"/></svg>
<svg style="left:22px;top:273px" width="6" height="9" viewBox="0 0 6 9"><path d="M0.6 0.9L4.3 4.5L0.6 8.1Z" fill="#fff" stroke="#a4a4a4" stroke-width=".95"/></svg>
<span class="t" style="left:691.9px;top:8px;font-size:15px;letter-spacing:0.103px;color:#1f1f1f;">Computerverwaltung</span>
<span class="t" style="left:20.2px;top:34px;font-size:12px;letter-spacing:-0.013px;color:#000;">Datei</span>
<span class="t" style="left:63.5px;top:34px;font-size:12px;letter-spacing:0.3px;color:#000;">Aktion</span>
<span class="t" style="left:114.4px;top:34px;font-size:12px;letter-spacing:0.058px;color:#000;">Ansicht</span>
<span class="t" style="left:169.8px;top:34px;font-size:12px;letter-spacing:-0.021px;color:#000;">?</span>
<span class="t" style="left:36.3px;top:86px;font-size:12px;letter-spacing:0.06px;color:#000;">Computerverwaltung (Lokal)</span>
<span class="t" style="left:54.8px;top:104px;font-size:12px;letter-spacing:-0.25px;color:#000;">System</span>
<span class="t" style="left:74.4px;top:122px;font-size:12px;letter-spacing:0.125px;color:#000;">Aufgabenplanung</span>
<span class="t" style="left:74.0px;top:140px;font-size:12px;letter-spacing:-0.225px;color:#000;">Ereignisanzeige</span>
<span class="t" style="left:74.0px;top:158px;font-size:12px;letter-spacing:-0.161px;color:#000;">Freigegebene Ordner</span>
<span class="t" style="left:74.0px;top:176px;font-size:12px;letter-spacing:-0.171px;color:#000;width:124.0px;overflow:hidden;">Lokale Benutzer und Gruppen</span>
<span class="t" style="left:74.0px;top:194px;font-size:12px;letter-spacing:0.014px;color:#000;">Leistung</span>
<span class="t" style="left:74.2px;top:212px;font-size:12px;letter-spacing:-0.146px;color:#000;">Geräte-Manager</span>
<span class="t" style="left:54.6px;top:230px;font-size:12px;letter-spacing:-0.104px;color:#000;">Datenspeicher</span>
<span class="t" style="left:74.0px;top:248px;font-size:12px;letter-spacing:0.042px;color:#000;">Datenträgerverwaltung</span>
<span class="t" style="left:54.6px;top:266px;font-size:12px;letter-spacing:0.08px;color:#000;width:144.4px;overflow:hidden;">Dienste und Anwendungen</span>
<span class="t" style="left:211.0px;top:87px;font-size:12px;letter-spacing:0.3px;color:#000;">Volume</span>
<span class="t" style="left:325.6px;top:87px;font-size:12px;letter-spacing:0.2px;color:#000;">Layout</span>
<span class="t" style="left:376.9px;top:87px;font-size:12px;letter-spacing:0.375px;color:#000;">Typ</span>
<span class="t" style="left:415.2px;top:87px;font-size:12px;letter-spacing:-0.135px;color:#000;">Dateisystem</span>
<span class="t" style="left:490.8px;top:87px;font-size:12px;letter-spacing:-0.2px;color:#000;">Status</span>
<span class="t" style="left:909.6px;top:87px;font-size:12px;letter-spacing:-0.156px;color:#000;">Kapazität</span>
<span class="t" style="left:979.0px;top:87px;font-size:12px;letter-spacing:0px;transform:scaleX(0.9457);transform-origin:0 0;color:#000;">Freier Speicher</span>
<span class="t" style="left:1068.5px;top:87px;font-size:12px;letter-spacing:-0.1px;color:#000;">% frei</span>
<span class="t" style="left:228.4px;top:105px;font-size:12px;letter-spacing:0px;transform:scaleX(0.9459);transform-origin:0 0;color:#000;">(C:)</span>
<span class="t" style="left:225.2px;top:122px;font-size:12px;letter-spacing:0.012px;color:#000;">Programme (D:)</span>
<span class="t" style="left:225.4px;top:139px;font-size:12px;letter-spacing:-0.194px;color:#000;">System-reserviert</span>
<span class="t" style="left:326.1px;top:105px;font-size:12px;letter-spacing:-0.058px;color:#000;">Einfach</span>
<span class="t" style="left:377.2px;top:105px;font-size:12px;letter-spacing:0px;transform:scaleX(0.9018);transform-origin:0 0;color:#000;">Basis</span>
<span class="t" style="left:415.2px;top:105px;font-size:12px;letter-spacing:0px;transform:scaleX(0.921);transform-origin:0 0;color:#000;">NTFS</span>
<span class="t" style="left:326.1px;top:122px;font-size:12px;letter-spacing:-0.058px;color:#000;">Einfach</span>
<span class="t" style="left:377.2px;top:122px;font-size:12px;letter-spacing:0px;transform:scaleX(0.9018);transform-origin:0 0;color:#000;">Basis</span>
<span class="t" style="left:415.2px;top:122px;font-size:12px;letter-spacing:0px;transform:scaleX(0.921);transform-origin:0 0;color:#000;">NTFS</span>
<span class="t" style="left:326.1px;top:139px;font-size:12px;letter-spacing:-0.058px;color:#000;">Einfach</span>
<span class="t" style="left:377.2px;top:139px;font-size:12px;letter-spacing:0px;transform:scaleX(0.9018);transform-origin:0 0;color:#000;">Basis</span>
<span class="t" style="left:415.2px;top:139px;font-size:12px;letter-spacing:0px;transform:scaleX(0.921);transform-origin:0 0;color:#000;">NTFS</span>
<span class="t" style="left:490.6px;top:105px;font-size:12px;letter-spacing:-0.032px;color:#000;">Fehlerfrei (Startpartition, Auslagerungsdatei, Absturzabbild, Primäre Partition)</span>
<span class="t" style="left:490.6px;top:122px;font-size:12px;letter-spacing:-0.007px;color:#000;">Fehlerfrei (Aktiv, Primäre Partition)</span>
<span class="t" style="left:490.6px;top:139px;font-size:12px;letter-spacing:-0.051px;color:#000;">Fehlerfrei (System, Aktiv, Primäre Partition)</span>
<span class="t" style="left:909.8px;top:105px;font-size:12px;letter-spacing:0px;transform:scaleX(0.8889);transform-origin:0 0;color:#000;">232,54 GB</span>
<span class="t" style="left:909.7px;top:122px;font-size:12px;letter-spacing:0px;transform:scaleX(0.896);transform-origin:0 0;color:#000;">1397,26 GB</span>
<span class="t" style="left:909.8px;top:139px;font-size:12px;letter-spacing:0px;transform:scaleX(0.9565);transform-origin:0 0;color:#000;">350 MB</span>
<span class="t" style="left:979.1px;top:105px;font-size:12px;letter-spacing:0px;transform:scaleX(0.8969);transform-origin:0 0;color:#000;">196,99 GB</span>
<span class="t" style="left:979.2px;top:122px;font-size:12px;letter-spacing:0px;transform:scaleX(0.8889);transform-origin:0 0;color:#000;">535,72 GB</span>
<span class="t" style="left:979.2px;top:139px;font-size:12px;letter-spacing:0px;transform:scaleX(0.9433);transform-origin:0 0;color:#000;">82 MB</span>
<span class="t" style="left:1068.3px;top:105px;font-size:12px;letter-spacing:0px;transform:scaleX(0.9245);transform-origin:0 0;color:#000;">85 %</span>
<span class="t" style="left:1068.3px;top:122px;font-size:12px;letter-spacing:0px;transform:scaleX(0.9245);transform-origin:0 0;color:#000;">38 %</span>
<span class="t" style="left:1068.3px;top:139px;font-size:12px;letter-spacing:0px;transform:scaleX(0.9245);transform-origin:0 0;color:#000;">23 %</span>
<span class="t" style="left:1329.9px;top:88px;font-size:12px;letter-spacing:-0.021px;color:#000;font-weight:bold;">A</span>
<span class="t" style="left:1333.1px;top:112px;font-size:12px;letter-spacing:-0.021px;color:#000;">D</span>
<span class="t" style="left:232.2px;top:404px;font-size:12px;letter-spacing:0.154px;color:#000;font-weight:bold;">Datenträger 0</span>
<span class="t" style="left:214.1px;top:419px;font-size:12px;letter-spacing:0px;transform:scaleX(0.8929);transform-origin:0 0;color:#000;">Basis</span>
<span class="t" style="left:214.2px;top:434px;font-size:12px;letter-spacing:0px;transform:scaleX(0.8889);transform-origin:0 0;color:#000;">232,88 GB</span>
<span class="t" style="left:214.2px;top:449px;font-size:12px;letter-spacing:0.17px;color:#000;">Online</span>
<span class="t" style="left:232.2px;top:503px;font-size:12px;letter-spacing:0.083px;color:#000;font-weight:bold;">Datenträger 1</span>
<span class="t" style="left:214.1px;top:518px;font-size:12px;letter-spacing:0px;transform:scaleX(0.8929);transform-origin:0 0;color:#000;">Basis</span>
<span class="t" style="left:214.1px;top:533px;font-size:12px;letter-spacing:0px;transform:scaleX(0.8976);transform-origin:0 0;color:#000;">1397,26 GB</span>
<span class="t" style="left:214.2px;top:548px;font-size:12px;letter-spacing:0.17px;color:#000;">Online</span>
<span class="t" style="left:337.1px;top:421px;font-size:12px;letter-spacing:0.047px;color:#000;font-weight:bold;">System-reserviert</span>
<span class="t" style="left:337.1px;top:436px;font-size:12px;letter-spacing:0px;transform:scaleX(0.9287);transform-origin:0 0;color:#000;">350 MB NTFS</span>
<span class="t" style="left:336.9px;top:451px;font-size:12px;letter-spacing:-0.051px;color:#000;">Fehlerfrei (System, Aktiv, Primäre Partition)</span>
<span class="t" style="left:619.2px;top:421px;font-size:12px;letter-spacing:0px;transform:scaleX(0.8658);transform-origin:0 0;color:#000;font-weight:bold;">(C:)</span>
<span class="t" style="left:613.5px;top:436px;font-size:12px;letter-spacing:0px;transform:scaleX(0.8929);transform-origin:0 0;color:#000;">232,54 GB NTFS</span>
<span class="t" style="left:613.4px;top:451px;font-size:12px;letter-spacing:-0.036px;color:#000;">Fehlerfrei (Startpartition, Auslagerungsdatei, Absturzabbild, Primäre Partition)</span>
<span class="t" style="left:336.9px;top:520px;font-size:12px;letter-spacing:-0.1px;color:#000;font-weight:bold;">Programme  (D:)</span>
<span class="t" style="left:336.9px;top:535px;font-size:12px;letter-spacing:0px;transform:scaleX(0.9013);transform-origin:0 0;color:#000;">1397,26 GB NTFS</span>
<span class="t" style="left:336.9px;top:550px;font-size:12px;letter-spacing:-0.021px;color:#000;">Fehlerfrei (Aktiv, Primäre Partition)</span>
</div></body></html>
